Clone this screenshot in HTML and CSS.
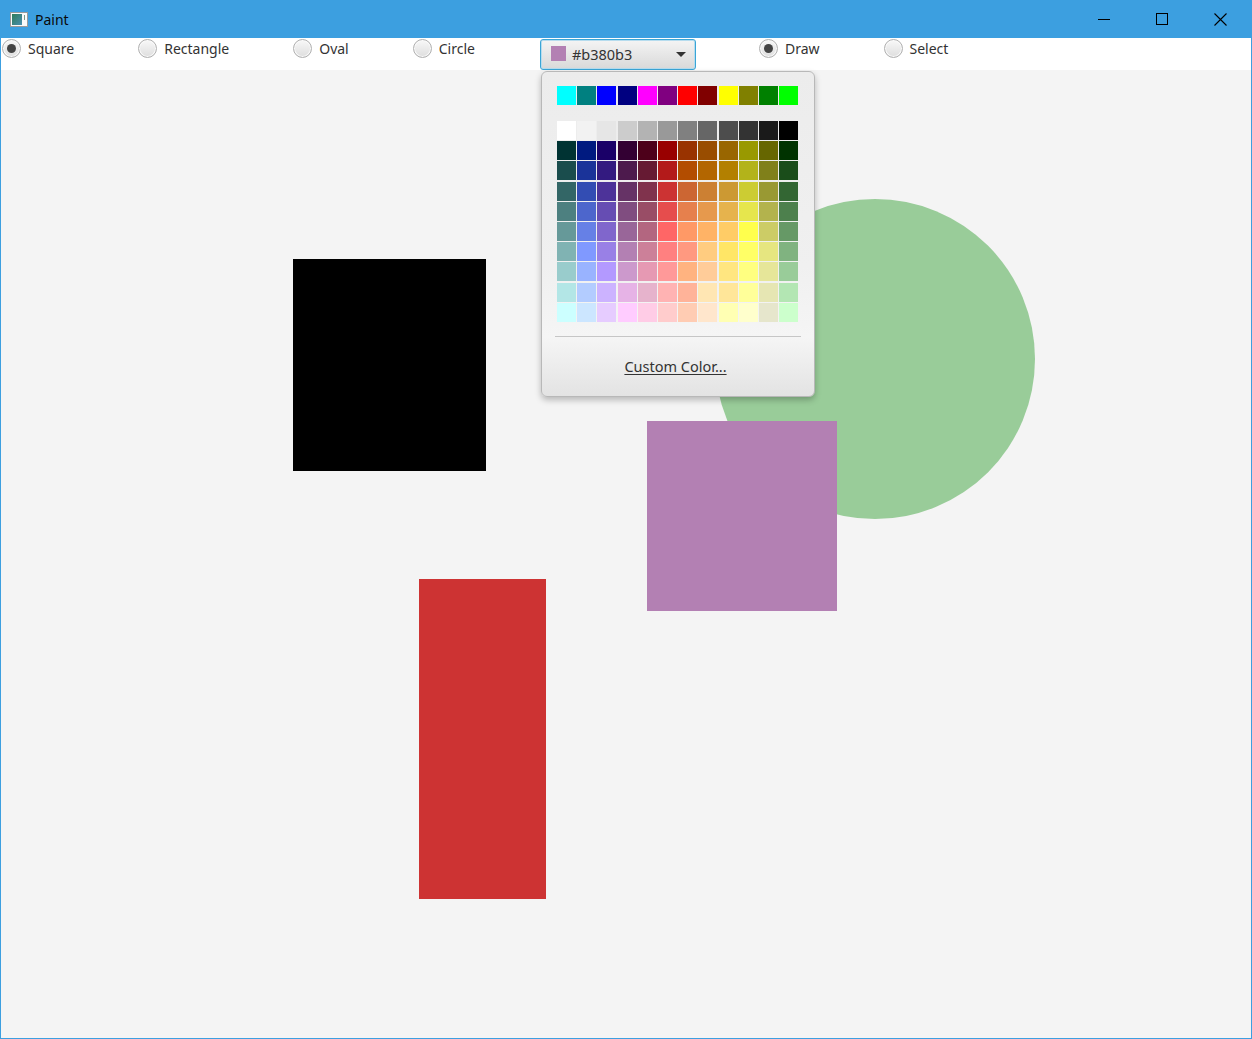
FILE: index.html
```html
<!DOCTYPE html>
<html>
<head>
<meta charset="utf-8">
<title>Paint</title>
<link rel="stylesheet" href="styles.css">
</head>
<body>
<div class="window">
  <div class="titlebar">
    <svg class="app-icon" width="18" height="15" viewBox="0 0 18 15">
      <rect x="0.5" y="0.5" width="17" height="14" fill="#fafafa" stroke="#9a9a9a"/>
      <defs><linearGradient id="g" x1="0" y1="0" x2="1" y2="1"><stop offset="0" stop-color="#2f7d5a"/><stop offset="1" stop-color="#4a8fb0"/></linearGradient></defs>
      <rect x="2" y="2" width="10" height="11" fill="url(#g)"/>
      <rect x="14" y="3" width="1" height="5" fill="#7a9a88"/>
    </svg>
    <span class="title">Paint</span>
    <div class="controls">
      <span class="ctl"><svg width="12" height="12" viewBox="0 0 12 12"><line x1="0" y1="6.5" x2="12" y2="6.5" stroke="#000" stroke-width="1"/></svg></span>
      <span class="ctl"><svg width="12" height="12" viewBox="0 0 12 12"><rect x="0.5" y="0.5" width="11" height="11" fill="none" stroke="#000" stroke-width="1"/></svg></span>
      <span class="ctl"><svg width="13" height="13" viewBox="0 0 13 13"><path d="M0.5 0.5 L12.5 12.5 M12.5 0.5 L0.5 12.5" stroke="#000" stroke-width="1.1"/></svg></span>
    </div>
  </div>
  <div class="toolbar">
    <label class="radio sel first"><span class="dot"></span>Square</label>
    <label class="radio"><span class="dot"></span>Rectangle</label>
    <label class="radio"><span class="dot"></span>Oval</label>
    <label class="radio"><span class="dot"></span>Circle</label>
    <div class="picker">
      <span class="swatch-sm"></span>
      <span class="picker-text">#b380b3</span>
      <span class="arrow"></span>
    </div>
    <label class="radio sel"><span class="dot"></span>Draw</label>
    <label class="radio"><span class="dot"></span>Select</label>
  </div>
  <div class="canvas">
    <div class="shape black"></div>
    <div class="shape circle"></div>
    <div class="shape purple"></div>
    <div class="shape red"></div>
  </div>
  <div class="popup">
    <div class="row-top">
      <span class="cell" style="background:#00ffff"></span>
      <span class="cell" style="background:#008080"></span>
      <span class="cell" style="background:#0000ff"></span>
      <span class="cell" style="background:#000080"></span>
      <span class="cell" style="background:#ff00ff"></span>
      <span class="cell" style="background:#800080"></span>
      <span class="cell" style="background:#ff0000"></span>
      <span class="cell" style="background:#800000"></span>
      <span class="cell" style="background:#ffff00"></span>
      <span class="cell" style="background:#808000"></span>
      <span class="cell" style="background:#008000"></span>
      <span class="cell" style="background:#00ff00"></span>
    </div>
    <div class="grid" id="grid"></div>
    <div class="sep"></div>
    <div class="custom"><span>Custom Color...</span></div>
  </div>
</div>
<script>
var v=[255,255,255,242,242,242,230,230,230,204,204,204,179,179,179,153,153,153,128,128,128,102,102,102,77,77,77,51,51,51,26,26,26,0,0,0,
0,51,51,0,26,128,26,0,104,51,0,51,77,0,26,153,0,0,153,51,0,153,77,0,153,102,0,153,153,0,102,102,0,0,51,0,
26,77,77,26,51,153,51,26,128,77,26,77,102,26,51,179,26,26,179,77,0,179,102,0,179,128,0,179,179,26,128,128,26,26,77,26,
51,102,102,51,77,179,77,51,153,102,51,102,128,51,77,204,51,51,204,102,51,204,128,51,204,153,51,204,204,51,153,153,51,51,102,51,
77,128,128,77,102,204,102,77,179,128,77,128,153,77,102,230,77,77,230,128,77,230,153,77,230,179,77,230,230,77,179,179,77,77,128,77,
102,153,153,102,128,230,128,102,204,153,102,153,179,102,128,255,102,102,255,153,102,255,179,102,255,204,102,255,255,77,204,204,102,102,153,102,
128,179,179,128,153,255,153,128,230,179,128,179,204,128,153,255,128,128,255,153,128,255,204,128,255,230,102,255,255,102,230,230,128,128,179,128,
153,204,204,153,179,255,179,153,255,204,153,204,230,153,179,255,153,153,255,179,128,255,204,153,255,230,128,255,255,128,230,230,153,153,204,153,
179,230,230,179,204,255,204,179,255,230,179,230,230,179,204,255,179,179,255,179,153,255,230,179,255,230,153,255,255,153,230,230,179,179,230,179,
204,255,255,204,230,255,230,204,255,255,204,255,255,204,230,255,204,204,255,204,179,255,230,204,255,255,179,255,255,204,230,230,204,204,255,204];
var g=document.getElementById('grid');
for(var i=0;i<v.length;i+=3){var s=document.createElement('span');s.className='cell';s.style.background='rgb('+v[i]+','+v[i+1]+','+v[i+2]+')';g.appendChild(s);}
</script>
</body>
</html>
```
FILE: styles.css
```css
* { box-sizing: border-box; }
html, body { margin: 0; padding: 0; }
body { font-family: "Noto Sans", "Open Sans", sans-serif; background: #fff; }
.window {
  position: relative;
  width: 1252px;
  height: 1039px;
  border: 1px solid #3c9fe0;
  border-top: none;
  display: flex;
  flex-direction: column;
  overflow: hidden;
}
.titlebar {
  height: 38px;
  margin: 0 -1px;
  background: #3c9fe0;
  display: flex;
  align-items: center;
  padding-left: 10px;
  flex-shrink: 0;
}
.title { font-size: 14px; color: #0a0a0a; margin-left: 7px; }
.controls { margin-left: auto; display: flex; height: 38px; padding-right: 3px; }
.ctl { width: 58px; display: flex; align-items: center; justify-content: center; }
.toolbar {
  height: 32px;
  background: #fff;
  display: flex;
  align-items: flex-start;
  gap: 64px;
  flex-shrink: 0;
  padding-top: 1px;
}
.radio {
  display: flex;
  align-items: center;
  font-size: 14px;
  color: #333;
  gap: 7px;
  height: 19px;
  line-height: 19px;
}
.radio.first { margin-left: 1px; }
.dot {
  width: 19px;
  height: 19px;
  border-radius: 50%;
  border: 1px solid #b0b0b0;
  background: linear-gradient(#f8f8f8, #dedede);
  box-shadow: inset 0 0 0 1px #fafafa;
  display: flex;
  align-items: center;
  justify-content: center;
}
.radio.sel .dot::after {
  content: "";
  width: 9px;
  height: 9px;
  border-radius: 50%;
  background: #444;
}
.picker {
  width: 156px;
  height: 31px;
  border: 1px solid #3aa5d6;
  border-radius: 3px;
  box-shadow: inset 0 0 0 1px #b6dcee;
  background: linear-gradient(#f4f4f4, #d9d9d9);
  display: flex;
  align-items: center;
  padding-left: 10px;
  padding-bottom: 2px;
  margin-left: 1px;
  margin-right: -1px;
}
.swatch-sm { width: 15px; height: 15px; background: #b380b3; }
.picker-text { font-size: 14.5px; line-height: 18px; color: #333; margin-left: 6px; }
.arrow {
  margin-left: auto;
  margin-right: 9px;
  width: 0; height: 0;
  border-left: 5px solid transparent;
  border-right: 5px solid transparent;
  border-top: 5px solid #333;
  margin-top: 2px;
}
.canvas {
  flex: 1;
  position: relative;
  background: #f4f4f4;
}
.shape { position: absolute; }
.black { left: 292px; top: 189px; width: 193px; height: 212px; background: #000; }
.circle { left: 714px; top: 129px; width: 320px; height: 320px; border-radius: 50%; background: #99cc99; }
.purple { left: 646px; top: 351px; width: 190px; height: 190px; background: #b380b3; }
.red { left: 418px; top: 509px; width: 127px; height: 320px; background: #cd3333; }
.popup {
  position: absolute;
  left: 540px;
  top: 71px;
  width: 274px;
  height: 326px;
  border: 1px solid #b8b8b8;
  border-radius: 6px;
  background: linear-gradient(#ececec 0%, #f0f0f0 60%, #f5f5f5 82%, #e3e3e3 100%);
  box-shadow: 0 3px 6px rgba(0,0,0,0.25);
  padding: 14px 0 0 15px;
  display: flex;
  flex-direction: column;
}
.row-top, .grid {
  display: grid;
  grid-template-columns: repeat(12, 19px);
  grid-auto-rows: 19px;
  gap: 1.2px;
}
.grid { margin-top: 16px; }
.cell { display: block; }
.sep {
  height: 1px;
  background: #c6c6c6;
  margin: 14px 13px 0 -2px;
}
.custom {
  flex: 1;
  display: flex;
  align-items: center;
  justify-content: center;
  padding-right: 20px;
}
.custom span {
  font-size: 14.5px;
  color: #333;
  text-decoration: underline;
  text-underline-offset: 2px;
}
```
